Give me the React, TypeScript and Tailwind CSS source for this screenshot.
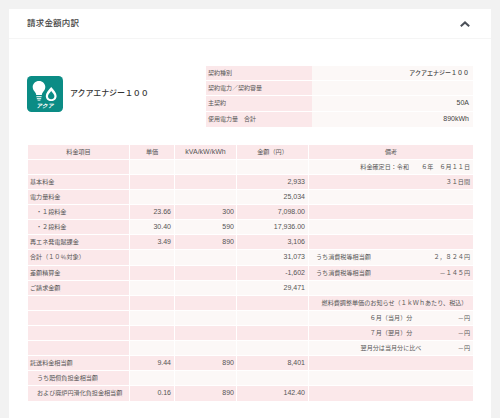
const jp = "font-['Liberation_Sans','Noto_Sans_CJK_JP',sans-serif]";

const contractRows = [
  { label: "契約種別", value: "アクアエナジー１００", num: false },
  { label: "契約電力／契約容量", value: "", num: false },
  { label: "主契約", value: "50A", num: true },
  { label: "使用電力量　合計", value: "890kWh", num: true },
];

type Row = {
  item?: string;
  indent?: "dot" | "sub";
  price?: string;
  qty?: string;
  amount?: string;
  note?: React.ReactNode;
};

function Split({ left, right }: { left: string; right: string }) {
  return (
    <div className="flex justify-between">
      <span className="pl-[4px]">{left}</span>
      <span>{right}</span>
    </div>
  );
}

function Centered({ left, right }: { left: string; right: string }) {
  return (
    <div className="grid grid-cols-[1fr_auto_1fr]">
      <span />
      <span>{left}</span>
      <span className="text-right">{right}</span>
    </div>
  );
}

const rows: Row[] = [
  { note: <div className="text-right">料金確定日：令和　　６年　６月１１日</div> },
  { item: "基本料金", amount: "2,933", note: <div className="text-right">３１日間</div> },
  { item: "電力量料金", amount: "25,034" },
  { item: "・１段料金", indent: "dot", price: "23.66", qty: "300", amount: "7,098.00" },
  { item: "・２段料金", indent: "dot", price: "30.40", qty: "590", amount: "17,936.00" },
  { item: "再エネ発電賦課金", price: "3.49", qty: "890", amount: "3,106" },
  { item: "合計（１０％対象）", amount: "31,073", note: <Split left="うち消費税等相当額" right="２，８２４円" /> },
  { item: "差額精算金", amount: "-1,602", note: <Split left="うち消費税等相当額" right="－１４５円" /> },
  { item: "ご請求金額", amount: "29,471" },
  { note: <div className="pl-[7px] text-center">燃料費調整単価のお知らせ（１ｋＷｈあたり、税込）</div> },
  { note: <Centered left="６月（当月）分" right="－円" /> },
  { note: <Centered left="７月（翌月）分" right="－円" /> },
  { note: <Centered left="翌月分は当月分に比べ" right="－円" /> },
  { item: "託送料金相当額", price: "9.44", qty: "890", amount: "8,401" },
  { item: "うち賠償負担金相当額", indent: "sub" },
  { item: "および廃炉円滑化負担金相当額", indent: "sub", price: "0.16", qty: "890", amount: "142.40" },
];

function AquaLogo() {
  return (
    <svg viewBox="0 0 36 36" className="w-[36px] h-[36px] shrink-0">
      <rect width="36" height="36" rx="4.5" fill="#0b8c85" />
      {/* bulb */}
      <path
        d="M12 5c-3.6 0-6.3 2.7-6.3 6.1 0 2.3 1.2 3.7 2.4 5.2.7.9 1 1.7 1.1 2.6h5.6c.1-.9.4-1.7 1.1-2.6 1.2-1.5 2.4-2.9 2.4-5.2C18.3 7.7 15.6 5 12 5z"
        fill="#fff"
      />
      <path d="M9.4 20h5.2v1.3H9.4zM9.8 22h4.4v1.2H9.8zM10.6 23.8h2.8v1h-2.8z" fill="#cfe8e6" />
      {/* drop */}
      <path
        d="M24.2 11c2.7 3.1 5.4 5.8 5.4 8.9 0 2.9-2.3 5.2-5.4 5.2s-5.4-2.3-5.4-5.2c0-3.1 2.7-5.8 5.4-8.9z"
        fill="#fff"
      />
      <path
        d="M24.2 14.9c1.6 2 3.2 3.6 3.2 5.3 0 1.8-1.4 3.1-3.2 3.1S21 22 21 20.2c0-1.7 1.6-3.3 3.2-5.3z"
        fill="#0b8c85"
      />
      <text
        x="18"
        y="32.3"
        textAnchor="middle"
        fill="#fff"
        fontSize="5.6"
        fontStyle="italic"
        fontWeight="700"
        letterSpacing="0.4"
        fontFamily="'Noto Sans CJK JP', sans-serif"
      >
        アクア
      </text>
    </svg>
  );
}

export default function App() {
  return (
    <div className={`h-[418px] overflow-hidden bg-[#f2f2f2] pt-[9px] px-[9px] text-[#555] ${jp}`}>
      <div className="h-full bg-white">
        {/* Header */}
        <div className="h-[30px] border-b border-[#f5f5f5] pl-[18px] pr-[21px] flex items-center justify-between">
          <h2 className="text-[8.5px] font-medium text-[#444] tracking-[0.2px]">請求金額内訳</h2>
          <svg viewBox="0 0 10 6" className="w-[10px] h-[6px]" fill="none" stroke="#4b5058" strokeWidth="2">
            <path d="M0.8 5.2 5 1.4 9.2 5.2" />
          </svg>
        </div>

        {/* Plan */}
        <div className="flex items-start pl-[18px] pr-[18px] pt-[27px]">
          <div className="mt-[10px] flex items-center">
            <AquaLogo />
            <span className="ml-[7px] text-[8px] font-medium text-[#333] tracking-[-0.1px] whitespace-nowrap">
              アクアエナジー１００
            </span>
          </div>
          <div className="ml-auto w-[267px]">
            {contractRows.map((r) => (
              <div key={r.label} className="flex h-[15.2px] border-b border-white last:border-b-0">
                <div className="w-[106px] bg-[#fbe8ea] pl-[2px] text-[6px] leading-[14px] whitespace-nowrap">
                  {r.label}
                </div>
                <div
                  className={`flex-1 bg-[#fcf8f7] pr-[4px] text-right leading-[14px] font-medium text-[#444] ${
                    r.num ? "text-[7px]" : "text-[6px]"
                  }`}
                >
                  {r.value}
                </div>
              </div>
            ))}
          </div>
        </div>

        {/* Charges */}
        <div className="mt-[18px] ml-[19px] mr-[18px]">
          <div className="flex h-[15.1px] text-center text-[6.1px] leading-[14px] bg-[#fbe8ea]">
            <div className="w-[102px] border-r border-b border-white">料金項目</div>
            <div className="w-[45px] border-r border-b border-white">単価</div>
            <div className="w-[62px] border-r border-b border-white text-[7px]">kVA/kW/kWh</div>
            <div className="w-[72px] border-r border-b border-white">金額（円）</div>
            <div className="flex-1 border-b border-white">備考</div>
          </div>
          {rows.map((r, i) => {
            const bg = i % 2 === 0 ? "bg-[#fcf8f7]" : "bg-[#fbe8ea]";
            return (
              <div key={i} className="flex h-[15.1px] leading-[14px] border-b border-white last:border-b-0">
                <div
                  className={`w-[102px] bg-[#fbe8ea] border-r border-white text-[6.1px] whitespace-nowrap ${
                    r.indent === "dot" ? "pl-[8px]" : r.indent === "sub" ? "pl-[9px]" : "pl-[2px]"
                  }`}
                >
                  {r.item}
                </div>
                <div className={`w-[45px] ${bg} border-r border-white pr-[3px] text-right text-[7px]`}>{r.price}</div>
                <div className={`w-[62px] ${bg} border-r border-white pr-[2px] text-right text-[7px]`}>{r.qty}</div>
                <div className={`w-[72px] ${bg} border-r border-white pr-[3px] text-right text-[7px]`}>{r.amount}</div>
                <div className={`flex-1 ${bg} px-[3px] text-[6.1px] whitespace-nowrap`}>{r.note}</div>
              </div>
            );
          })}
        </div>
      </div>
    </div>
  );
}
